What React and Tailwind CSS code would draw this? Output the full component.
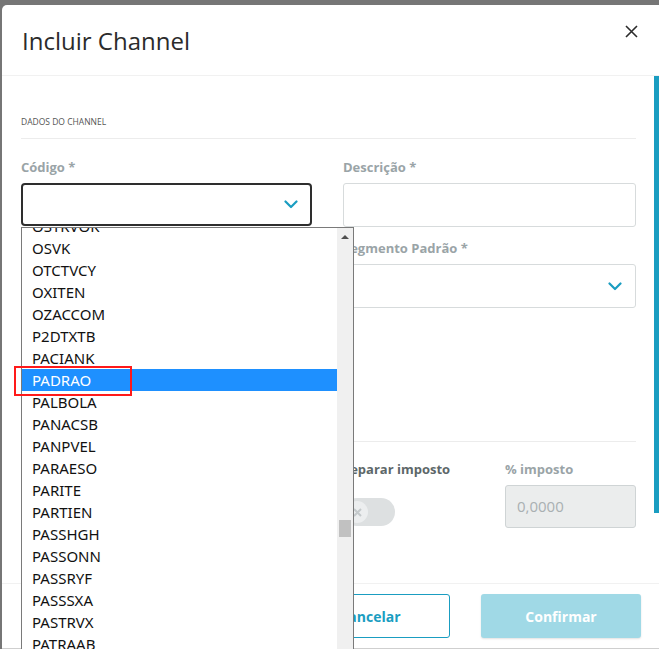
import { useState } from "react";

const codes = [
  "OSTRVOK", "OSVK", "OTCTVCY", "OXITEN", "OZACCOM", "P2DTXTB", "PACIANK", "PADRAO",
  "PALBOLA", "PANACSB", "PANPVEL", "PARAESO", "PARITE", "PARTIEN", "PASSHGH",
  "PASSONN", "PASSRYF", "PASSSXA", "PASTRVX", "PATRAAB",
];

const Chevron = () => (
  <svg width="14" height="9" viewBox="0 0 14 9" fill="none">
    <polyline points="1.5,1.5 7,7 12.5,1.5" stroke="#1a9dc1" strokeWidth="2.2" strokeLinecap="round" strokeLinejoin="round" />
  </svg>
);

const Label = ({ children, dark }) => (
  <label className={`block text-[13px] leading-[18px] font-bold mb-[7px] ${dark ? "text-[#5d6769]" : "text-[#9aa4a7]"}`}>
    {children}
  </label>
);

function CodeDropdown({ selected }) {
  return (
    <div className="absolute left-0 top-full w-[333px] h-[430px] bg-white border border-[#7a7a7a] flex z-20 font-['Noto_Sans',sans-serif]">
      <div className="flex-1 overflow-hidden">
        <ul className="-mt-[13px]">
          {codes.map((c) => (
            <li
              key={c}
              className={`h-[22px] leading-[22px] pl-[10px] text-[15px] ${c === selected ? "bg-[#1e90ff] text-white" : "text-[#111]"}`}
            >
              {c}
            </li>
          ))}
        </ul>
      </div>
      {/* native-looking scrollbar */}
      <div className="w-[16px] bg-[#f0f0f0] relative">
        <div className="flex justify-center pt-[7px]">
          <div className="w-0 h-0 border-l-[4px] border-r-[4px] border-b-[4px] border-l-transparent border-r-transparent border-b-[#505050]" />
        </div>
        <div className="absolute left-[2px] top-[292px] w-[12px] h-[17px] bg-[#c1c1c1]" />
      </div>
    </div>
  );
}

export default function App() {
  const [open] = useState(true);

  return (
    <div className="relative w-[659px] h-[649px] overflow-hidden bg-[#767676] pt-[5px] pl-[2px] font-['Open_Sans',sans-serif]">
      <div className="w-[657px] h-[644px] bg-white rounded-tl-[5px] flex flex-col">
        {/* Header */}
        <div className="h-[71px] shrink-0 flex items-center justify-between pl-5 pr-[21px] border-b border-[#f1f1f1]">
          <h1 className="text-[24px] text-[#2b2b2b] leading-none mt-[2px]">Incluir Channel</h1>
          <button className="-mt-[17px]">
            <svg width="13" height="13" viewBox="0 0 13 13">
              <path d="M1 1 L12 12 M12 1 L1 12" stroke="#2b2b2b" strokeWidth="1.6" />
            </svg>
          </button>
        </div>

        {/* Body */}
        <div className="flex-1 flex min-h-0">
          <div className="flex-1 pl-[19px] pr-[18px] pt-[40px]">
            <div className="text-[8.5px] leading-[12px] text-[#555] uppercase pb-[10px] border-b border-[#ececec]">
              Dados do Channel
            </div>

            <div className="grid grid-cols-[291px_293px] gap-x-[31px] pt-[19px]">
              <div className="relative">
                <Label>Código *</Label>
                <div className="h-[43px] border-2 border-[#2e2e2e] rounded-[4px] flex items-center justify-end pr-[12px]">
                  <Chevron />
                </div>
                {open && <CodeDropdown selected="PADRAO" />}
              </div>
              <div>
                <Label>Descrição *</Label>
                <div className="h-[44px] border border-[#d7dbdc] rounded-[3px]" />
              </div>

              <div className="pt-[12px]" />
              <div className="pt-[12px]">
                <Label>Segmento Padrão *</Label>
                <div className="h-[44px] border border-[#d7dbdc] rounded-[3px] flex items-center justify-end pr-[13px]">
                  <Chevron />
                </div>
              </div>
            </div>

            <div className="mt-[133px] border-t border-[#ececec]" />

            <div className="grid grid-cols-[291px_131px_131px] gap-x-[31px] pt-[18px]">
              <div />
              <div>
                <Label dark>Separar imposto</Label>
                <div className="mt-[20px] w-[52px] h-[28px] rounded-full bg-[#dde0e1] flex items-center pl-[3px]">
                  <div className="w-[22px] h-[22px] rounded-full bg-[#eceeef] flex items-center justify-center">
                    <svg width="9" height="9" viewBox="0 0 9 9">
                      <path d="M1 1 L8 8 M8 1 L1 8" stroke="#c4c9cb" strokeWidth="2" />
                    </svg>
                  </div>
                </div>
              </div>
              <div>
                <Label>% imposto</Label>
                <div className="h-[43px] border border-[#cfd4d5] rounded-[3px] bg-[#ebeded] flex items-center pl-[11px] text-[15px] text-[#a9b0b2]">
                  0,0000
                </div>
              </div>
            </div>
          </div>
          {/* body scrollbar */}
          <div className="w-[5px] shrink-0">
            <div className="h-[437px] bg-[#1a9dc1]" />
          </div>
        </div>

        {/* Footer */}
        <div className="h-[66px] shrink-0 border-t border-[#f1f1f1] border-b border-b-[#cfcfcf] flex items-start justify-end gap-[31px] pt-[10px] pr-[18px]">
          <button className="w-[160px] h-[44px] rounded-[3px] border border-[#1a9dc1] bg-white text-[#1a9dc1] text-[14px] font-bold">
            Cancelar
          </button>
          <button className="w-[160px] h-[44px] rounded-[3px] bg-[#a0d9e6] text-white text-[14px] font-bold shadow-[0_1px_2px_rgba(0,0,0,0.12)]">
            Confirmar
          </button>
        </div>
      </div>

      {/* highlight marker */}
      <div className="absolute left-[14px] top-[366px] w-[118px] h-[30px] border-2 border-[#ff1a1a] z-30" />
    </div>
  );
}
